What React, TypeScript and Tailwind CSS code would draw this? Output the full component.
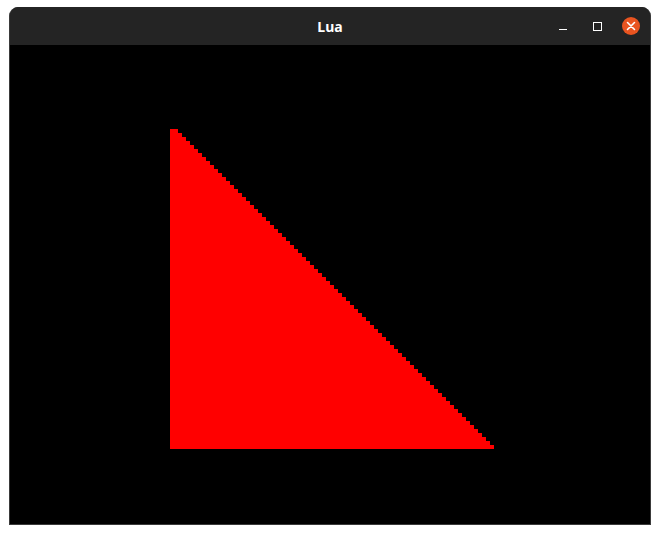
import React from 'react';

// staircase triangle: 80 rows of 4px, row i is 8 + 4*i wide
const stairPath = () => {
  let d = 'M0 0';
  for (let i = 0; i < 80; i++) {
    const w = 8 + 4 * i;
    d += ` H${w} V${(i + 1) * 4}`;
  }
  d += ' H0 Z';
  return d;
};

const App = () => {
  return (
    <div className="w-[660px] h-[535px] bg-white pl-[9px] pt-[7px]">
      <div className="w-[642px] h-[518px] flex flex-col rounded-t-[9px] overflow-hidden bg-[#242424] border border-[#3a3a3a] border-t-0">
        <div className="h-[38px] shrink-0 relative flex items-center justify-center bg-[#242424]">
          <span className="text-white text-[14px] font-bold font-['Noto_Sans',sans-serif] mt-[1px]">Lua</span>
          <div className="absolute right-[10px] top-0 h-full flex items-center gap-[16px]">
            <div className="w-[18px] h-[18px] flex items-end justify-center pb-[5px]">
              <div className="w-[8px] h-[1px] bg-white" />
            </div>
            <div className="w-[18px] h-[18px] flex items-center justify-center">
              <div className="w-[9px] h-[9px] border border-white" />
            </div>
            <div className="w-[18px] h-[18px] rounded-full bg-[#e95420] flex items-center justify-center">
              <svg width="10" height="10" viewBox="0 0 10 10">
                <path d="M1.5 1.5 L8.5 8.5 M8.5 1.5 L1.5 8.5" stroke="white" strokeWidth="1.6" strokeLinecap="round" />
              </svg>
            </div>
          </div>
        </div>
        <div className="flex-1 bg-black pl-[160px] pt-[84px]">
          <svg width="324" height="320" viewBox="0 0 324 320" shapeRendering="crispEdges" className="block">
            <path d={stairPath()} fill="#ff0000" />
          </svg>
        </div>
      </div>
    </div>
  );
};

export default App;
